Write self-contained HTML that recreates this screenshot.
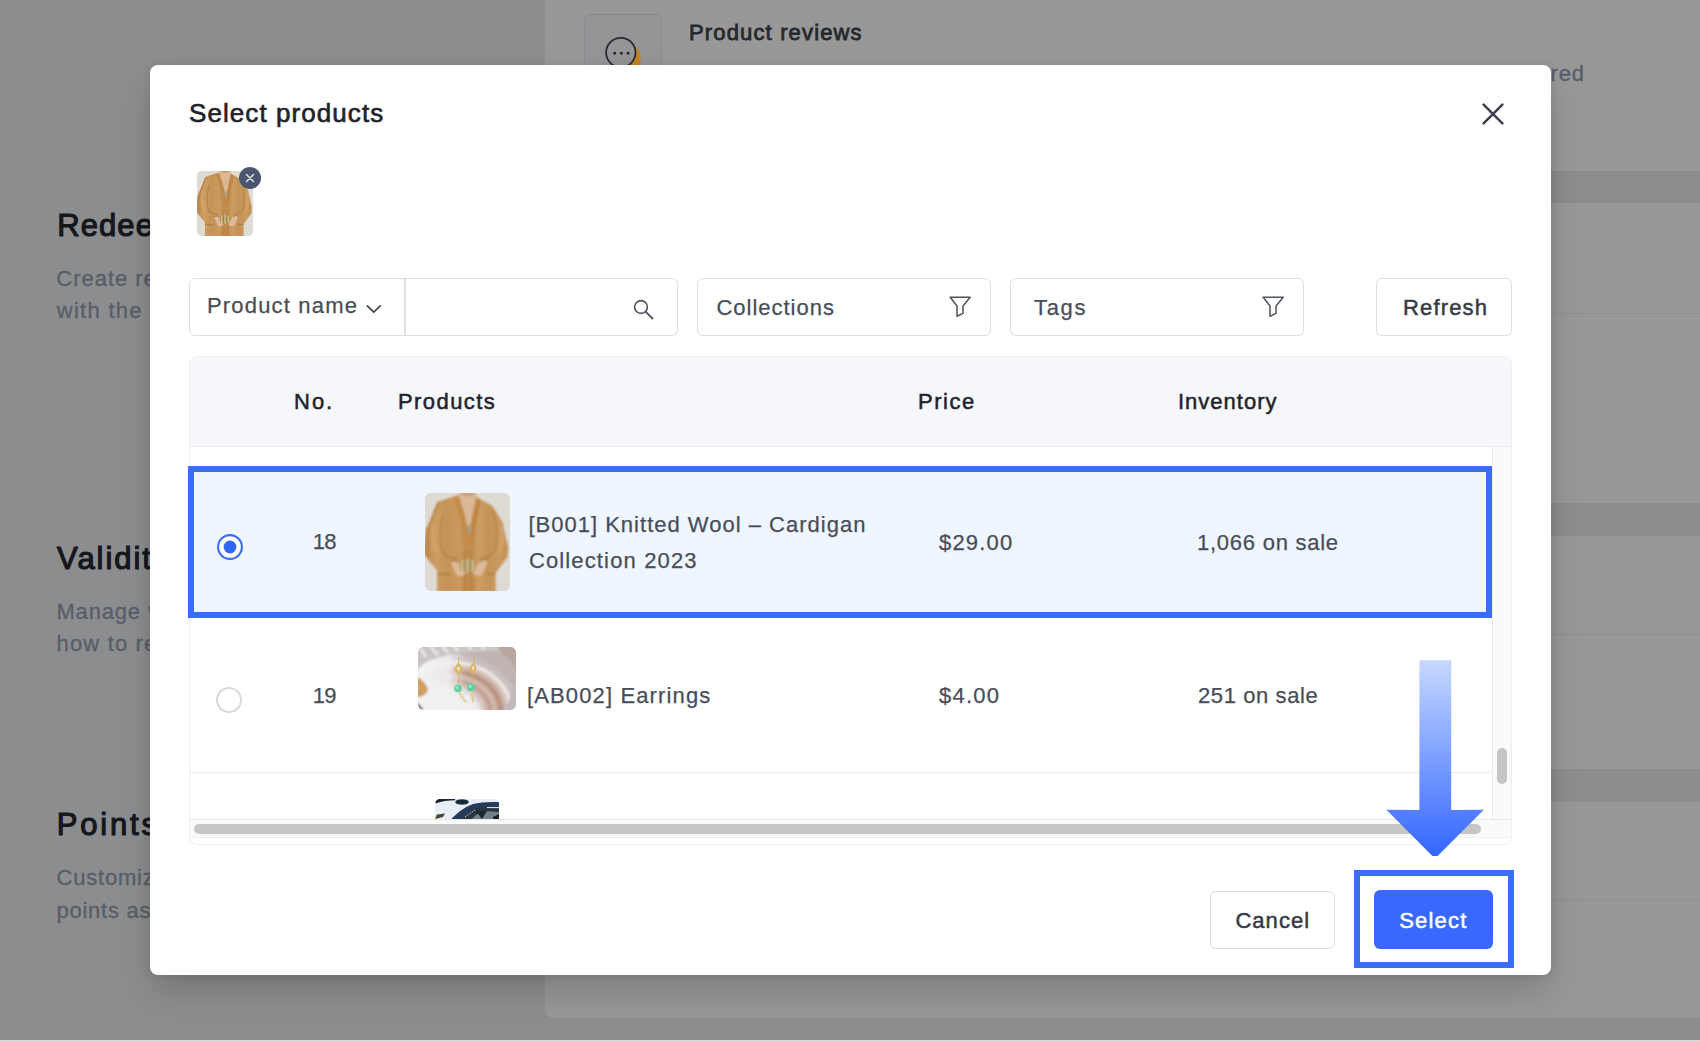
<!DOCTYPE html>
<html lang="en">
<head>
<meta charset="utf-8">
<title>Select products</title>
<style>
*{box-sizing:border-box;margin:0;padding:0}
html,body{width:1700px;height:1041px;overflow:hidden}
body{font-family:"Liberation Sans",sans-serif;background:#8c8d8f;position:relative;color:#1f2329}
.abs{position:absolute;white-space:nowrap}
/* background page (already dimmed by the overlay) */
.card{position:absolute;background:#989898}
.bgh{position:absolute;left:56px;font-weight:400;-webkit-text-stroke:1.15px #15171c;font-size:31px;color:#15171c;white-space:nowrap;line-height:40px}
.bgp{position:absolute;left:56px;font-size:22px;-webkit-text-stroke:0.3px #595d69;color:#595d69;white-space:nowrap;line-height:32px}
.hline{position:absolute;left:1551px;right:0;height:1px;background:#8f8f91}
/* modal */
#modal{position:absolute;left:150px;top:65px;width:1401px;height:910px;background:#fff;border-radius:8px;box-shadow:0 18px 36px -4px rgba(0,0,0,.19),0 1px 8px rgba(0,0,0,.09)}
#title{font-size:26px;font-weight:400;-webkit-text-stroke:0.65px #1f2329;line-height:40px;color:#1f2329}
.box{position:absolute;top:213px;height:58px;border:1.5px solid #dcdfe6;border-radius:6px;background:#fff}
.ftxt{position:absolute;font-size:22px;line-height:30px;-webkit-text-stroke:0.25px #484d58;color:#484d58;white-space:nowrap}
.btn{position:absolute;height:58px;border-radius:6px;font-size:22px;font-weight:400;-webkit-text-stroke:0.5px;text-align:center;line-height:56px;white-space:nowrap}
#table{position:absolute;left:39px;top:291px;width:1323px;height:489px;border:1px solid #eceef2;border-radius:8px;overflow:hidden;background:#fff}
#thead{position:absolute;left:0;top:0;width:100%;height:90px;background:#f5f7fb;border-bottom:1px solid #ebedf0}
.th{position:absolute;top:30px;font-size:22px;font-weight:400;-webkit-text-stroke:0.5px #1f2329;line-height:30px;color:#1f2329;white-space:nowrap}
.td{position:absolute;font-size:22px;line-height:36px;-webkit-text-stroke:0.25px #484d58;color:#484d58;white-space:nowrap}
</style>
</head>
<body>
<svg width="0" height="0" style="position:absolute">
  <defs>
    <filter id="soft" x="-5%" y="-5%" width="110%" height="110%"><feGaussianBlur stdDeviation="0.6"/></filter>
    <linearGradient id="tan" x1="0" y1="0" x2="1" y2="0"><stop offset="0" stop-color="#bd8a4f"/><stop offset=".28" stop-color="#cd9d63"/><stop offset=".5" stop-color="#c59358"/><stop offset=".8" stop-color="#cb9a5f"/><stop offset="1" stop-color="#c08d52"/></linearGradient>
    
  </defs>
</svg>

<!-- dimmed background page -->
<div class="card" style="left:545px;top:-20px;width:1175px;height:191px"></div>
<div class="card" style="left:545px;top:203px;width:1175px;height:300px"></div>
<div class="card" style="left:545px;top:536px;width:1175px;height:233px"></div>
<div class="card" style="left:545px;top:802px;width:1175px;height:216px;border-radius:0 0 0 8px"></div>
<div class="hline" style="top:313px"></div>
<div class="hline" style="top:634px"></div>
<div class="hline" style="top:900px"></div>

<div class="bgh" style="left:57.2px;top:206.3px;letter-spacing:1.1px">Redeem</div>
<div class="bgp" style="left:56.3px;top:262.7px;letter-spacing:0.98px">Create re</div>
<div class="bgp" style="left:56.7px;top:294.6px;letter-spacing:1.3px">with the</div>
<div class="bgh" style="left:57.1px;top:538.8px;letter-spacing:1.93px">Validity</div>
<div class="bgp" style="left:56.4px;top:595.5px;letter-spacing:0.84px">Manage v</div>
<div class="bgp" style="left:56.6px;top:628.3px;letter-spacing:1.15px">how to re</div>
<div class="bgh" style="left:56.7px;top:804.9px;letter-spacing:2.83px">Points</div>
<div class="bgp" style="left:56.6px;top:861.5px;letter-spacing:0.78px">Customize</div>
<div class="bgp" style="left:56.6px;top:894.5px;letter-spacing:0.72px">points as</div>

<div class="abs" style="left:584px;top:14px;width:78px;height:78px;border:1px solid #8a8b8e;border-radius:7px;background:#949597"></div>
<svg class="abs" style="left:600px;top:32px" width="50" height="44" viewBox="0 0 50 44">
  <circle cx="25.2" cy="26.6" r="15.6" fill="#be8426"/>
  <circle cx="20.8" cy="20.6" r="14.7" fill="#949597" stroke="#25272b" stroke-width="1.7"/>
  <circle cx="14.7" cy="21.3" r="1.45" fill="#25272b"/><circle cx="21.4" cy="21.3" r="1.45" fill="#25272b"/><circle cx="28.1" cy="21.3" r="1.45" fill="#25272b"/>
</svg>
<div class="abs" id="pr" style="left:689px;top:16.8px;font-size:22px;font-weight:400;-webkit-text-stroke:0.8px #26282d;line-height:32px;color:#26282d;letter-spacing:1.15px">Product reviews</div>
<div class="abs" style="left:1216.5px;top:58.2px;font-size:22px;line-height:32px;color:#595d69">l</div>
<div class="abs" id="red" style="left:1550.5px;top:58.2px;font-size:22px;line-height:32px;-webkit-text-stroke:0.3px #595d69;color:#595d69;letter-spacing:0.9px">red</div>

<div class="abs" style="left:0;top:1040px;width:1700px;height:1px;background:#dadada"></div>
<!-- modal -->
<div id="modal">
  <div class="abs" id="title" style="left:39px;top:28px;letter-spacing:1.07px">Select products</div>
  <svg class="abs" style="left:1330.5px;top:36.5px" width="24" height="24" viewBox="0 0 24 24"><path d="M2.6 2.6 L21.4 21.4 M21.4 2.6 L2.6 21.4" stroke="#3a4050" stroke-width="2.5" stroke-linecap="round" fill="none"/></svg>

  <!-- selected thumb -->
  <div class="abs" id="thumb" style="left:47px;top:106px;width:56px;height:65px;border-radius:5px;overflow:hidden;background:#dcdad6">
    <svg width="56" height="65" viewBox="0 0 56 65" preserveAspectRatio="none" style="display:block">
      <rect width="56" height="65" fill="#dedbd5"/>
      <g filter="url(#soft)">
        <path d="M22.5 -1 L33.5 -1 L34.2 2.8 L32 12 L28.6 25 L25 12 L22 2.8 Z" fill="#dab896"/>
        <path d="M24 -1 L32 -1 L31 2 L25 2 Z" fill="#c79d78"/>
        <path d="M17.4 2.8 L22.3 1.2 L25.2 12 L28.6 25 L28.6 66 L7.9 66 L7.9 51.4 L0 41.8 L-1 40 L0.6 24 L9 5.7 Z" fill="url(#tan)"/>
        <path d="M34.2 2.8 L44.4 8.7 L51 19 L54.7 36 L54.3 42.6 L46.6 52.9 L46.6 66 L28.6 66 L28.6 25 L32 12 Z" fill="url(#tan)"/>
        <path d="M27 21.5 L30.6 21.5 L30 27.5 L28.2 28 Z" fill="#9fa392"/>
        <path d="M18.6 2.4 L22.6 3 L26.2 14 L31.2 38.6 L26.4 38.6 L23 16 Z" fill="#c7914f"/>
        <path d="M33.6 2.6 L37 5 L34.6 16 L31.2 38.6 L29.4 30 L31.4 14 Z" fill="#c28b49"/>
        <path d="M19.4 3 L23.6 17 L26.8 37 M21 3 L25 15 L29.6 37" stroke="#b27c3c" stroke-width="0.5" fill="none"/>
        <path d="M35.6 4 L33 15 L30.4 32" stroke="#b27c3c" stroke-width="0.5" fill="none"/>
        <path d="M25.6 38 L31.4 38 L31.4 66 L25.6 66 Z" fill="#c08a49"/>
        <path d="M25.6 38 L25.6 66 M31.4 38 L31.4 66" stroke="#ae7a3d" stroke-width="0.6"/>
        <circle cx="27.6" cy="38.8" r="1" fill="#b08a50"/><circle cx="27" cy="59.6" r="1" fill="#b08a50"/>
        <path d="M9 6 Q3.5 18 1.6 30 Q1 37 3 42" stroke="#b98548" stroke-width="1.6" fill="none"/>
        <path d="M12 14 Q8 30 12 40 Q16 44 22 43" stroke="#b5813f" stroke-width="1.2" fill="none" opacity=".8"/>
        <path d="M45 12 Q49 28 46 38 Q42 44 36 43" stroke="#b5813f" stroke-width="1.2" fill="none" opacity=".8"/>
        <path d="M5 20 Q4 32 8 40" stroke="#d6aa72" stroke-width="2.4" fill="none" opacity=".6"/>
        <path d="M50 22 Q52 32 49 40" stroke="#d6aa72" stroke-width="2.4" fill="none" opacity=".6"/>
        <path d="M17 45.6 Q19.6 43.6 22.6 46 L26.6 53.4 Q24 56.6 20.6 54.4 Z" fill="#ddb999"/>
        <path d="M41.6 45 Q38.6 43.2 35.6 45.6 L31.4 53.4 Q34 56.4 37.6 54.2 Z" fill="#ddb999"/>
        <path d="M17 45.8 Q19.4 43.8 22.4 46" stroke="#a77446" stroke-width="0.9" fill="none"/>
        <path d="M41.6 45.2 Q38.8 43.4 35.8 45.6" stroke="#a77446" stroke-width="0.9" fill="none"/>
        <ellipse cx="28" cy="48.2" rx="5.5" ry="4.8" fill="#b0945a"/>
        <path d="M25 44.6 Q23.8 48.4 25.2 52 M28 43.6 L28 52.8 M31 44.6 Q32.2 48.4 30.8 52" stroke="#dccb9c" stroke-width="1.1" fill="none"/>
        <path d="M26.5 44 Q25.8 48.4 26.6 52.4 M29.5 44 Q30.2 48.4 29.4 52.4" stroke="#8b7440" stroke-width="0.5" fill="none"/>
        <path d="M8 53.6 L17.4 54 M40.4 54 L46.4 53.4" stroke="#a87538" stroke-width="0.9"/>
      </g>
    </svg>
  </div>
  <svg class="abs" style="left:88px;top:101px" width="24" height="24" viewBox="0 0 24 24"><circle cx="12" cy="12" r="11" fill="#4a5670"/><path d="M8.5 8.5 L15.5 15.5 M15.5 8.5 L8.5 15.5" stroke="#dfe3ea" stroke-width="1.5" stroke-linecap="round"/></svg>

  <!-- filters -->
  <div class="box" style="left:39px;width:489px"></div>
  <div class="abs" style="left:254px;top:214px;width:1.5px;height:56px;background:#dcdfe6"></div>
  <div class="ftxt" id="pn" style="left:57px;top:226.3px;letter-spacing:1.18px">Product name</div>
  <svg class="abs" style="left:215px;top:238px" width="18" height="12" viewBox="0 0 18 12"><path d="M2.3 2.8 L8.75 9.2 L15.2 2.8" stroke="#434852" stroke-width="1.7" fill="none" stroke-linecap="round" stroke-linejoin="round"/></svg>
  <svg class="abs" style="left:481px;top:231.5px" width="24" height="24" viewBox="0 0 24 24"><circle cx="10" cy="10" r="6.4" stroke="#4d525d" stroke-width="1.6" fill="none"/><path d="M14.8 14.8 L21.5 21.5" stroke="#4d525d" stroke-width="1.8" stroke-linecap="round"/></svg>

  <div class="box" style="left:547px;width:294px"></div>
  <div class="ftxt" id="col" style="left:566.5px;top:227.7px;letter-spacing:0.98px">Collections</div>
  <svg class="abs" style="left:797px;top:229px" width="26" height="26" viewBox="0 0 26 26"><path d="M3.2 3.2 L23.2 3.2 L16 12 L16 19.4 L10 22.3 L10 12 Z" stroke="#4d525d" stroke-width="1.5" fill="none" stroke-linejoin="round"/></svg>

  <div class="box" style="left:860px;width:294px"></div>
  <div class="ftxt" id="tags" style="left:884px;top:227.8px;letter-spacing:1.67px">Tags</div>
  <svg class="abs" style="left:1110px;top:229px" width="26" height="26" viewBox="0 0 26 26"><path d="M3.2 3.2 L23.2 3.2 L16 12 L16 19.4 L10 22.3 L10 12 Z" stroke="#4d525d" stroke-width="1.5" fill="none" stroke-linejoin="round"/></svg>

  <div class="btn" id="refresh" style="left:1226px;top:213px;width:136px;line-height:57.6px;border:1.5px solid #dcdfe6;color:#353b45;background:#fff;letter-spacing:1.17px;text-indent:3.17px">Refresh</div>

  <!-- table -->
  <div id="table">
    <div id="thead">
      <div class="th" id="thno" style="left:104px;letter-spacing:2px">No.</div>
      <div class="th" id="thpr" style="left:208px;letter-spacing:1.43px">Products</div>
      <div class="th" id="thpc" style="left:728px;letter-spacing:1.5px">Price</div>
      <div class="th" id="thin" style="left:988px;letter-spacing:1px">Inventory</div>
    </div>
    <!-- vertical scrollbar -->
    <div class="abs" style="left:1302px;top:90px;width:20px;height:373px;background:#fafafa;border-left:1px solid #ebebeb"></div>
    <div class="abs" style="left:1307px;top:391.3px;width:10.2px;height:35.3px;border-radius:5px;background:#c5c5c5"></div>

    <!-- row 18 (selected) -->
    <div class="abs" style="left:0;top:111px;width:1302px;height:148px;background:#eff6ff"></div>
    <svg class="abs" style="left:25.5px;top:176.3px" width="28" height="28" viewBox="0 0 28 28"><circle cx="14" cy="14" r="11.9" fill="#fff" stroke="#3b6cf6" stroke-width="2.1"/><circle cx="14" cy="14" r="6.4" fill="#3366f5"/></svg>
    <div class="td" id="n18" style="left:122.8px;top:167.4px;letter-spacing:-0.8px">18</div>
    <div class="abs" style="left:235px;top:136px;width:85px;height:98px;border-radius:6px;overflow:hidden;background:#dcdad6">
      <svg width="85" height="98" viewBox="0 0 56 65" preserveAspectRatio="none" style="display:block">
      <rect width="56" height="65" fill="#dedbd5"/>
      <g filter="url(#soft)">
        <path d="M22.5 -1 L33.5 -1 L34.2 2.8 L32 12 L28.6 25 L25 12 L22 2.8 Z" fill="#dab896"/>
        <path d="M24 -1 L32 -1 L31 2 L25 2 Z" fill="#c79d78"/>
        <path d="M17.4 2.8 L22.3 1.2 L25.2 12 L28.6 25 L28.6 66 L7.9 66 L7.9 51.4 L0 41.8 L-1 40 L0.6 24 L9 5.7 Z" fill="url(#tan)"/>
        <path d="M34.2 2.8 L44.4 8.7 L51 19 L54.7 36 L54.3 42.6 L46.6 52.9 L46.6 66 L28.6 66 L28.6 25 L32 12 Z" fill="url(#tan)"/>
        <path d="M27 21.5 L30.6 21.5 L30 27.5 L28.2 28 Z" fill="#9fa392"/>
        <path d="M18.6 2.4 L22.6 3 L26.2 14 L31.2 38.6 L26.4 38.6 L23 16 Z" fill="#c7914f"/>
        <path d="M33.6 2.6 L37 5 L34.6 16 L31.2 38.6 L29.4 30 L31.4 14 Z" fill="#c28b49"/>
        <path d="M19.4 3 L23.6 17 L26.8 37 M21 3 L25 15 L29.6 37" stroke="#b27c3c" stroke-width="0.5" fill="none"/>
        <path d="M35.6 4 L33 15 L30.4 32" stroke="#b27c3c" stroke-width="0.5" fill="none"/>
        <path d="M25.6 38 L31.4 38 L31.4 66 L25.6 66 Z" fill="#c08a49"/>
        <path d="M25.6 38 L25.6 66 M31.4 38 L31.4 66" stroke="#ae7a3d" stroke-width="0.6"/>
        <circle cx="27.6" cy="38.8" r="1" fill="#b08a50"/><circle cx="27" cy="59.6" r="1" fill="#b08a50"/>
        <path d="M9 6 Q3.5 18 1.6 30 Q1 37 3 42" stroke="#b98548" stroke-width="1.6" fill="none"/>
        <path d="M12 14 Q8 30 12 40 Q16 44 22 43" stroke="#b5813f" stroke-width="1.2" fill="none" opacity=".8"/>
        <path d="M45 12 Q49 28 46 38 Q42 44 36 43" stroke="#b5813f" stroke-width="1.2" fill="none" opacity=".8"/>
        <path d="M5 20 Q4 32 8 40" stroke="#d6aa72" stroke-width="2.4" fill="none" opacity=".6"/>
        <path d="M50 22 Q52 32 49 40" stroke="#d6aa72" stroke-width="2.4" fill="none" opacity=".6"/>
        <path d="M17 45.6 Q19.6 43.6 22.6 46 L26.6 53.4 Q24 56.6 20.6 54.4 Z" fill="#ddb999"/>
        <path d="M41.6 45 Q38.6 43.2 35.6 45.6 L31.4 53.4 Q34 56.4 37.6 54.2 Z" fill="#ddb999"/>
        <path d="M17 45.8 Q19.4 43.8 22.4 46" stroke="#a77446" stroke-width="0.9" fill="none"/>
        <path d="M41.6 45.2 Q38.8 43.4 35.8 45.6" stroke="#a77446" stroke-width="0.9" fill="none"/>
        <ellipse cx="28" cy="48.2" rx="5.5" ry="4.8" fill="#b0945a"/>
        <path d="M25 44.6 Q23.8 48.4 25.2 52 M28 43.6 L28 52.8 M31 44.6 Q32.2 48.4 30.8 52" stroke="#dccb9c" stroke-width="1.1" fill="none"/>
        <path d="M26.5 44 Q25.8 48.4 26.6 52.4 M29.5 44 Q30.2 48.4 29.4 52.4" stroke="#8b7440" stroke-width="0.5" fill="none"/>
        <path d="M8 53.6 L17.4 54 M40.4 54 L46.4 53.4" stroke="#a87538" stroke-width="0.9"/>
      </g>
    </svg>
    </div>
    <div class="td" id="t18a" style="left:338.4px;top:149.8px;letter-spacing:1.01px">[B001] Knitted Wool – Cardigan</div>
    <div class="td" id="t18b" style="left:338.9px;top:185.6px;letter-spacing:1.14px">Collection 2023</div>
    <div class="td" id="p18" style="left:749px;top:167.5px;letter-spacing:1.2px">$29.00</div>
    <div class="td" id="i18" style="left:1007px;top:167.5px;letter-spacing:0.75px">1,066 on sale</div>

    <!-- row 19 -->
    <svg class="abs" style="left:25.3px;top:329.2px" width="28" height="28" viewBox="0 0 28 28"><circle cx="14" cy="14" r="12" fill="#fff" stroke="#d5d9e0" stroke-width="2"/></svg>
    <div class="td" id="n19" style="left:122.8px;top:321.4px;letter-spacing:-0.8px">19</div>
    <div class="abs" style="left:228.2px;top:289.9px;width:98px;height:63.4px;border-radius:6px;overflow:hidden;background:#ebe6e3">
      <svg width="98" height="64" viewBox="0 0 98 64" style="display:block">
        <defs>
          <filter id="soft2" x="-10%" y="-10%" width="120%" height="120%"><feGaussianBlur stdDeviation="1.3"/></filter>
          <radialGradient id="sh" gradientUnits="userSpaceOnUse" cx="34" cy="66" r="72" gradientTransform="translate(0 10) scale(1 .85)"><stop offset="0" stop-color="#f4f4f6"/><stop offset=".36" stop-color="#eceaec"/><stop offset=".45" stop-color="#d6c6c2"/><stop offset=".53" stop-color="#c2a090"/><stop offset=".6" stop-color="#d3bbb0"/><stop offset=".68" stop-color="#b8927f"/><stop offset=".76" stop-color="#d2bdb4"/><stop offset=".83" stop-color="#ece6e3"/><stop offset=".88" stop-color="#cbc4c3"/><stop offset="1" stop-color="#c0b4b2"/></radialGradient>
          <linearGradient id="wash" x1="0" y1="0" x2="1" y2="0"><stop offset="0" stop-color="#f3f3f5" stop-opacity="1"/><stop offset=".45" stop-color="#f1f0f2" stop-opacity=".9"/><stop offset=".7" stop-color="#efeced" stop-opacity="0"/></linearGradient>
        </defs>
        <rect width="98" height="64" fill="url(#sh)"/>
        <g filter="url(#soft2)">
          <path d="M-2 22 Q14 8 40 7 Q60 8 70 24 Q64 50 58 70 L-2 70 Z" fill="url(#wash)"/>
          <path d="M-2 -2 L100 -2 L100 6 Q80 2 60 5 Q30 6 10 14 Q2 18 -2 26 Z" fill="#cbc6c6"/>
          <path d="M2 0 L8 10 M12 -1 L20 8 M24 -1 L30 6 M36 -1 L40 4 M50 -1 L53 3 M64 -1 L66 3" stroke="#efedec" stroke-width="2.2"/>
          <path d="M78 -2 L100 -2 L100 26 Q94 12 84 6 Z" fill="#b9a49f"/>
          <path d="M-2 30 Q6 32 10 42 Q9 48 2 50 L-2 50 Z" fill="#cfa062"/>
          <path d="M-2 54 L4 60 L6 66 L-2 66 Z" fill="#8d7769"/>
          <path d="M96 40 Q92 54 84 66 L100 66 L100 40 Z" fill="#c1b9bd"/>
        </g>
        <g filter="url(#soft)">
          <path d="M41 10 L40.4 17 M57 9 L55.6 16" stroke="#cfae63" stroke-width="0.8"/>
          <path d="M35.6 22 L40.4 15.6 L45 21 L41 28.8 Z" fill="#d6b768"/>
          <path d="M50.6 21 L55.4 15.4 L59 20.6 L55 27.6 Z" fill="#d8b45e"/>
          <path d="M38.6 21.4 L40.6 19 L42.4 21.4 L40.6 24.6 Z M53.4 20.6 L55.2 18.6 L56.8 20.6 L55.2 23.6 Z" fill="#f0e3c3"/>
          <path d="M41 29 L40.4 37 M55 28 L53.6 36.4" stroke="#cfae63" stroke-width="0.9"/>
          <circle cx="40" cy="41.5" r="3.8" fill="#5bd09e"/><circle cx="53" cy="40.4" r="3.8" fill="#5bd09e"/>
          <circle cx="39.2" cy="40.6" r="1.7" fill="#93e6c3"/><circle cx="52.2" cy="39.5" r="1.7" fill="#93e6c3"/>
          <path d="M41.4 46 L47.4 54.4" stroke="#e6d6a6" stroke-width="2.6" stroke-linecap="round"/>
          <path d="M53.6 45.4 L55.2 54" stroke="#e2cd92" stroke-width="2.2" stroke-linecap="round"/>
        </g>
      </svg>
    </div>
    <div class="td" id="t19" style="left:337px;top:321.4px;letter-spacing:1.13px">[AB002] Earrings</div>
    <div class="td" id="p19" style="left:749px;top:321.4px;letter-spacing:1.25px">$4.00</div>
    <div class="td" id="i19" style="left:1008px;top:321.4px;letter-spacing:0.6px">251 on sale</div>
    <div class="abs" style="left:0;top:415px;width:1302px;height:1px;background:#ebedf0"></div>

    <!-- row 20 (partially visible) -->
    <div class="abs" style="left:245.2px;top:441.8px;width:63.7px;height:24px;border-radius:5px 5px 0 0;overflow:hidden;background:#e6edf4">
      <svg width="64" height="24" viewBox="0 0 64 24" style="display:block">
        <rect width="64" height="24" fill="#e7eef5"/>
        <g filter="url(#soft)">
          <path d="M0 4 Q8 0 22 0 L0 0 Z" fill="#1a2230"/>
          <path d="M1 3.5 Q9 0.6 20 0.4" stroke="#1a2230" stroke-width="1.6" fill="none"/>
          <ellipse cx="27" cy="3" rx="6.8" ry="2.8" fill="#1f2c3f"/>
          <path d="M13 24 Q24 10 38 5 Q48 2.4 64 3 L64 24 Z" fill="#263a58"/>
          <path d="M24 24 Q32 12 44 9 L64 9 L64 24 Z" fill="#2a3440"/>
          <path d="M52 8.6 L64 8.6" stroke="#eef2f6" stroke-width="1"/>
          <path d="M34 24 Q40 14 50 12 L64 13 L64 24 Z" fill="#70818c"/>
          <path d="M41 12 L52 12 L47 20 Z" fill="#1c252d"/>
          <path d="M58 18 L64 15 L64 24 L59 24 Z" fill="#18202a"/>
          <path d="M30 18 L40 11" stroke="#dfe6ec" stroke-width="0.9" stroke-dasharray="1.5 1.2"/>
          <path d="M0 20 L2 15.5 L10 14.5 L8 18 Z" fill="#4a4a36"/>
        </g>
      </svg>
    </div>

    <!-- horizontal scrollbar -->
    <div class="abs" style="left:0;top:462px;width:1322px;height:18.6px;background:#fafafa;border-top:1px solid #e9e9e9;border-bottom:1px solid #f0f0f0"></div>
    <div class="abs" style="left:4px;top:467px;width:1286.6px;height:9.8px;border-radius:5px;background:#c7c6c5"></div>
  </div>

  <!-- selected row outline -->
  <div class="abs" id="row18" style="left:38px;top:401px;width:1303.7px;height:151.6px;border:6px solid #3a6cff"></div>

  <!-- arrow -->
  <svg class="abs" style="left:1235px;top:593px" width="100" height="200" viewBox="0 0 100 200">
    <defs><linearGradient id="ag" x1="0" y1="0" x2="0" y2="1"><stop offset="0" stop-color="#c6d8ff"/><stop offset="1" stop-color="#3366ff"/></linearGradient></defs>
    <path d="M34.4 2.2 L66.2 2.2 L66.2 152 L98.8 151.8 L52.6 198 L47.4 198 L1.4 151.8 L34.4 152 Z" fill="url(#ag)"/>
  </svg>

  <!-- footer buttons -->
  <div class="btn" id="cancel" style="left:1060px;top:826px;width:125px;line-height:57.2px;border:1.5px solid #dcdfe6;color:#353b45;background:#fff;letter-spacing:1.05px;text-indent:0.6px">Cancel</div>
  <div class="abs" id="hl" style="left:1204px;top:805px;width:160px;height:98px;border:6px solid #3a6cff"></div>
  <div class="btn" id="select" style="left:1224px;top:825px;width:119px;height:59px;background:#3868ff;color:#fff;line-height:61.6px;letter-spacing:1.2px;text-indent:-0.4px">Select</div>
</div>
</body>
</html>
